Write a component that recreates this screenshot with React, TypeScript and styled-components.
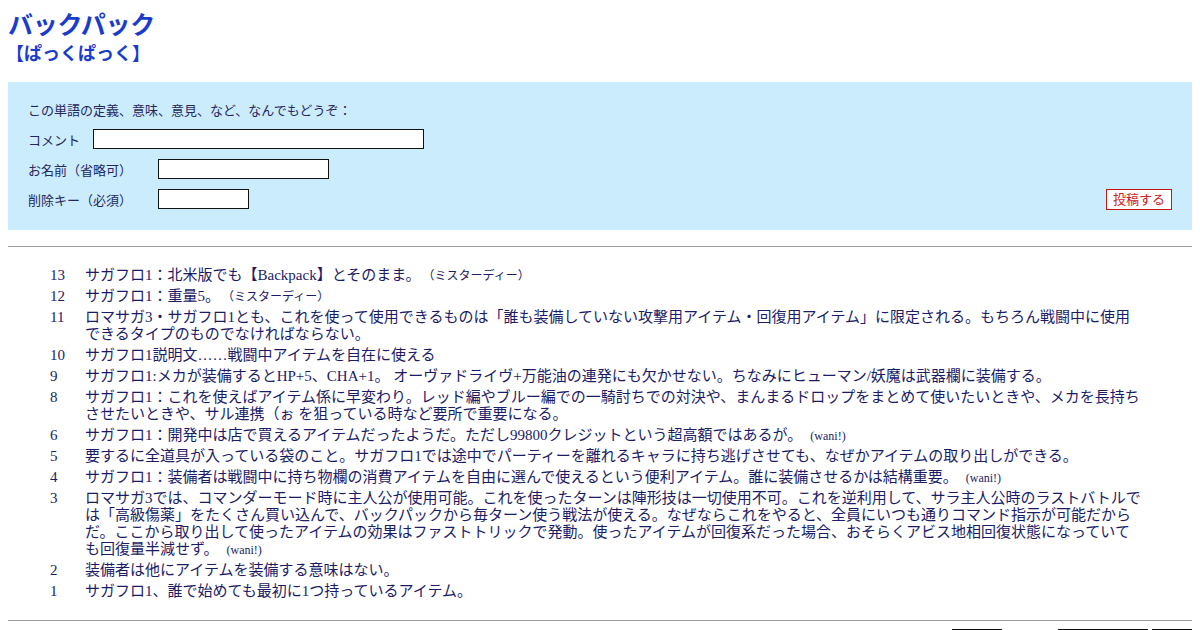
import styled, { createGlobalStyle } from "styled-components"

const GlobalStyle = createGlobalStyle`
  body {
    margin: 8px;
    background: #fff;
    font-family: "Liberation Serif", "Noto Sans CJK JP", serif;
  }
`

type Entry = {
  num: number
  text: string
  author?: string
}

const entries: Entry[] = [
  { num: 13, text: "サガフロ1：北米版でも【Backpack】とそのまま。", author: "（ミスターディー）" },
  { num: 12, text: "サガフロ1：重量5。", author: "（ミスターディー）" },
  {
    num: 11,
    text: "ロマサガ3・サガフロ1とも、これを使って使用できるものは「誰も装備していない攻撃用アイテム・回復用アイテム」に限定される。もちろん戦闘中に使用できるタイプのものでなければならない。",
  },
  { num: 10, text: "サガフロ1説明文……戦闘中アイテムを自在に使える" },
  {
    num: 9,
    text: "サガフロ1:メカが装備するとHP+5、CHA+1。 オーヴァドライヴ+万能油の連発にも欠かせない。ちなみにヒューマン/妖魔は武器欄に装備する。",
  },
  {
    num: 8,
    text: "サガフロ1：これを使えばアイテム係に早変わり。レッド編やブルー編での一騎討ちでの対決や、まんまるドロップをまとめて使いたいときや、メカを長持ちさせたいときや、サル連携（ぉ を狙っている時など要所で重要になる。",
  },
  {
    num: 6,
    text: "サガフロ1：開発中は店で買えるアイテムだったようだ。ただし99800クレジットという超高額ではあるが。",
    author: "(wani!)",
  },
  {
    num: 5,
    text: "要するに全道具が入っている袋のこと。サガフロ1では途中でパーティーを離れるキャラに持ち逃げさせても、なぜかアイテムの取り出しができる。",
  },
  {
    num: 4,
    text: "サガフロ1：装備者は戦闘中に持ち物欄の消費アイテムを自由に選んで使えるという便利アイテム。誰に装備させるかは結構重要。",
    author: "(wani!)",
  },
  {
    num: 3,
    text: "ロマサガ3では、コマンダーモード時に主人公が使用可能。これを使ったターンは陣形技は一切使用不可。これを逆利用して、サラ主人公時のラストバトルでは「高級傷薬」をたくさん買い込んで、バックパックから毎ターン使う戦法が使える。なぜならこれをやると、全員にいつも通りコマンド指示が可能だからだ。ここから取り出して使ったアイテムの効果はファストトリックで発動。使ったアイテムが回復系だった場合、おそらくアビス地相回復状態になっていても回復量半減せず。",
    author: "(wani!)",
  },
  { num: 2, text: "装備者は他にアイテムを装備する意味はない。" },
  { num: 1, text: "サガフロ1、誰で始めても最初に1つ持っているアイテム。" },
]

const App = () => {
  return (
    <>
      <GlobalStyle />
      <Header>
        <Title>バックパック</Title>
        <Reading>【ぱっくぱっく】</Reading>
      </Header>

      <PostBox>
        <Intro>この単語の定義、意味、意見、など、なんでもどうぞ：</Intro>
        <FormRow>
          <Label space={13}>コメント</Label>
          <TextInput width={331} />
        </FormRow>
        <FormRow>
          <Label space={26}>お名前（省略可）</Label>
          <TextInput width={171} />
        </FormRow>
        <FormRow>
          <Label space={26}>削除キー（必須）</Label>
          <TextInput width={91} />
          <SubmitButton>投稿する</SubmitButton>
        </FormRow>
      </PostBox>

      <Rule />

      <EntryList>
        {entries.map((entry) => (
          <EntryRow key={entry.num}>
            <EntryNum>{entry.num}</EntryNum>
            <EntryText>
              {entry.text}
              {entry.author && <Author>{entry.author}</Author>}
            </EntryText>
          </EntryRow>
        ))}
      </EntryList>

      <Rule />

      <Pager>
        <PagerInput width={50} />
        <PagerGap />
        <PagerInput width={90} />
        <PagerButton />
      </Pager>
    </>
  )
}

const Header = styled.div`
  color: #1a3ccc;
  font-family: "Noto Sans CJK JP", sans-serif;
  font-weight: bold;
`

const Title = styled.h1`
  margin: 0;
  font-size: 25px;
  line-height: 30px;
  letter-spacing: -0.3px;
`

const Reading = styled.div`
  font-size: 18px;
  line-height: 28px;
  margin-left: -2px;
`

const PostBox = styled.div`
  margin-top: 16px;
  background: #caecfc;
  padding: 19px 20px 21px 20px;
  font-family: "Noto Sans CJK JP", sans-serif;
  font-size: 13px;
  color: #27275e;
`

const Intro = styled.div`
  line-height: 18px;
`

const FormRow = styled.div`
  display: flex;
  align-items: center;
  height: 20px;
  margin-top: 10px;
`

const Label = styled.span<{ space: number }>`
  margin-right: ${(p) => p.space}px;
  white-space: nowrap;
`

const TextInput = styled.input.attrs({ type: "text" })<{ width: number }>`
  box-sizing: border-box;
  width: ${(p) => p.width}px;
  height: 20px;
  border: 1px solid #111;
  background: #fff;
  padding: 0 2px;
  margin: 0;
`

const SubmitButton = styled.button`
  margin-left: auto;
  box-sizing: border-box;
  height: 21px;
  width: 66px;
  padding: 0;
  border: 1px solid #c01818;
  background: #fff;
  color: #cc2222;
  font-family: "Noto Sans CJK JP", sans-serif;
  font-size: 13px;
  line-height: 18px;
`

const Rule = styled.hr`
  border: 0;
  border-top: 1px solid #9c9c9c;
  margin: 16px 0 0 0;
  height: 0;
`

const EntryList = styled.div`
  margin: 18px 40px 18px 40px;
  color: #1c1c66;
  font-size: 15px;
  line-height: 17px;
`

const EntryRow = styled.div`
  display: grid;
  grid-template-columns: 37px 1fr;
  padding: 2px 0 2px 0;
`

const EntryNum = styled.div`
  padding-left: 2px;
`

const EntryText = styled.div`
  max-width: 1056px;
`

const Author = styled.span`
  font-size: 12px;
  line-height: 1;
  margin-left: 8px;
`

const Pager = styled.div`
  display: flex;
  justify-content: flex-end;
  margin-top: 8px;
`

const PagerInput = styled.div<{ width: number }>`
  box-sizing: border-box;
  width: ${(p) => p.width}px;
  height: 20px;
  border: 1px solid #111;
`

const PagerGap = styled.div`
  width: 56px;
`

const PagerButton = styled.div`
  box-sizing: border-box;
  width: 40px;
  height: 20px;
  margin-left: 4px;
  border: 1px solid #111;
`

export default App
